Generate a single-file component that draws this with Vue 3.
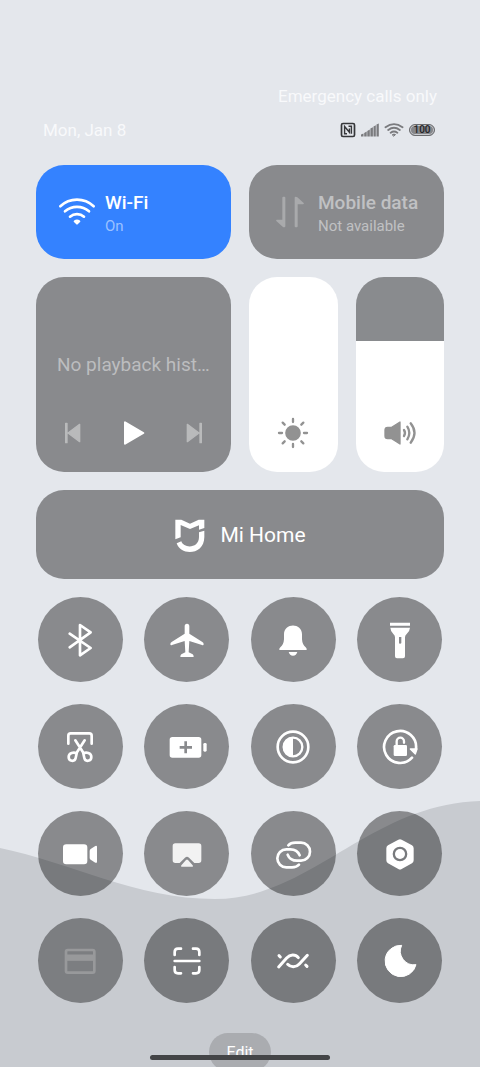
<script setup>
import { ref } from 'vue'

const brightness = ref(100)
const volume = ref(67)
</script>

<template>
  <main class="screen">
    <svg class="wave" viewBox="0 0 480 267" preserveAspectRatio="none" aria-hidden="true">
      <path d="M0 48 C70 62 135 99 215 99 C310 99 370 4 480 1 V267 H0Z" />
    </svg>

    <header class="status">
      <p class="carrier">Emergency calls only</p>
      <div class="status-row">
        <span>Mon, Jan 8</span>
        <div class="indicators">
          <svg width="16" height="16" viewBox="0 0 16 16" fill="none" stroke="#36373a" aria-label="NFC">
            <rect x="1.500" y="1.500" width="13" height="13" rx="1.500" stroke-width="1.700" />
            <path d="M7 11.800H4.600V4.500L9.400 10.300V6.500M8.500 4.300H11.400V11.800" stroke-width="1.400" />
          </svg>
          <svg width="18" height="14" viewBox="0 0 18 14" fill="#7a7b7e" aria-label="Signal">
            <path d="M0 11.500 L2.500 10.500V13.500H0zM3.200 10L5.700 8.500V13.500H3.200zM6.300 8L8.800 6.500V13.500H6.300zM9.400 5.500L11.900 4.200V13.500H9.400zM12.500 3.500L14.800 2.200V13.500H12.500zM15.500 1.500L17.800 .5V13.500H15.500z" />
          </svg>
          <svg width="20" height="14" viewBox="0 0 20 14" fill="none" stroke="#7a7b7e" stroke-width="1.900" stroke-linecap="round" aria-label="Wi-Fi signal">
            <path d="M1.500 4.200Q10-2 18.500 4.200M4.200 7Q10 2.600 15.800 7M6.700 9.700Q10 7.200 13.300 9.700" />
            <path d="M8.500 11.600Q10 10.500 11.500 11.600L10 13Z" fill="#7a7b7e" stroke-width="1" />
          </svg>
          <span class="battery">100</span>
        </div>
      </div>
    </header>

    <section class="panel" aria-label="Control center">
      <div class="pair">
        <button class="card toggle on" aria-pressed="true">
          <svg class="icon" viewBox="-72 -72 144 144" fill="none" stroke="#fff" stroke-width="8" stroke-linecap="round">
            <path d="M-50 -17A72 72 0 0 1 50 -17M-36 -2A55 55 0 0 1 36 -2M-21 14A32 32 0 0 1 21 14" />
            <path d="M-7 28Q0 23 7 28L0 35Z" fill="#fff" stroke-width="6" stroke-linejoin="round" />
          </svg>
          <span class="labels"><strong>Wi-Fi</strong><small>On</small></span>
        </button>
        <button class="card toggle off" aria-pressed="false">
          <svg class="icon" viewBox="-72 -72 144 144" fill="#a9aaac">
            <path d="M-23 -43Q-23 -46 -20 -46H-17Q-14 -46 -14 -43V43Q-14 46 -17 46Q-20 46 -22 44L-41 27Q-43 23 -39 23H-23Z" />
            <path transform="rotate(180)" d="M-23 -43Q-23 -46 -20 -46H-17Q-14 -46 -14 -43V43Q-14 46 -17 46Q-20 46 -22 44L-41 27Q-43 23 -39 23H-23Z" />
          </svg>
          <span class="labels"><strong>Mobile data</strong><small>Not available</small></span>
        </button>
      </div>

      <div class="pair">
        <div class="card media">
          <p>No playback hist…</p>
          <div class="transport">
            <button aria-label="Previous">
              <svg class="icon" viewBox="-72 -72 144 144" fill="#b9babb" stroke="#b9babb" stroke-width="4" stroke-linejoin="round">
                <path d="M-22 -29H-18V29H-22ZM-15 0L20 -26V26Z" />
              </svg>
            </button>
            <button aria-label="Play">
              <svg class="icon" viewBox="-72 -72 144 144" fill="#fff" stroke="#fff" stroke-width="6" stroke-linejoin="round">
                <path d="M-27 -32V32L28 0Z" />
              </svg>
            </button>
            <button aria-label="Next">
              <svg class="icon" viewBox="-72 -72 144 144" fill="#b9babb" stroke="#b9babb" stroke-width="4" stroke-linejoin="round">
                <path d="M22 -29H18V29H22ZM15 0L-20 -26V26Z" />
              </svg>
            </button>
          </div>
        </div>
        <div class="sliders">
          <label class="slider">
            <input v-model="brightness" type="range" min="0" max="100" aria-label="Brightness" :style="{ '--level': brightness + '%' }" />
            <svg class="icon" viewBox="-72 -72 144 144" fill="#929292" stroke="#929292" stroke-width="7" stroke-linecap="round">
              <circle r="20" />
              <path d="M0 -42V-33M0 33V42M-42 0H-33M33 0H42M-31 -31L-25 -25M25 25L31 31M-31 31L-25 25M25 -25L31 -31" />
            </svg>
          </label>
          <label class="slider">
            <input v-model="volume" type="range" min="0" max="100" aria-label="Volume" :style="{ '--level': volume + '%' }" />
            <svg class="icon" viewBox="-72 -72 144 144" fill="#929292" stroke="#929292" stroke-linecap="round" stroke-linejoin="round">
              <path d="M-37 -17H-25L0 -33V33L-25 17H-37Q-45 17 -45 9V-9Q-45 -17 -37 -17Z" stroke-width="4" />
              <path d="M12 -9Q18 0 12 9M22 -19Q34 0 22 19M32 -29Q55 0 32 29" fill="none" stroke-width="7" />
            </svg>
          </label>
        </div>
      </div>

      <button class="card home">
        <svg class="icon" viewBox="-72 -72 144 144" fill="#fff">
          <path d="M-44 -46H-26L0 -34L26 -46H43V-21L27 -16V-29L0 -18L-28 -30V7L-44 13Z" />
          <path d="M-40 25L-26 19C-19 41 27 41 27 6V-8L43 -13V6C43 61 -28 64 -40 25Z" />
        </svg>
        <span>Mi Home</span>
      </button>

      <div class="grid">
        <button aria-label="Bluetooth">
          <svg class="icon" viewBox="-72 -72 144 144" fill="none" stroke="#fff" stroke-width="8" stroke-linecap="round" stroke-linejoin="round">
            <path d="M-31 -19L32 24L0 46V-45L32 -23L-31 22" />
          </svg>
        </button>
        <button aria-label="Airplane mode">
          <svg class="icon" viewBox="-72 -72 144 144" fill="#fff">
            <path d="M-7 -41Q-7 -49 0 -49Q7 -49 7 -41V-19L45 5Q50 8 50 12Q50 17 45 15L7 3L5 37L17 43Q20 45 20 51H-20Q-20 45 -17 43L-5 37L-7 3L-45 15Q-50 17 -50 12Q-50 8 -45 5L-7 -19Z" />
          </svg>
        </button>
        <button aria-label="Silent">
          <svg class="icon" viewBox="-72 -72 144 144" fill="#fff">
            <path d="M-27 -17C-27 -52 27 -52 27 -17V-2Q28 14 38 22Q42 26 41 30H-41Q-42 26 -38 22Q-28 14 -27 -2ZM-13 36H13Q10 47 0 47Q-10 47 -13 36Z" />
          </svg>
        </button>
        <button aria-label="Flashlight">
          <svg class="icon" viewBox="-72 -72 144 144" fill="#fff" fill-rule="evenodd">
            <path d="M-30 -52H30V-43H-30ZM-29 -37H30Q29 -25 20 -18Q15 -14 15 -8V49Q15 55 9 55H-9Q-15 55 -15 49V-8Q-15 -14 -20 -18Q-28 -25 -29 -37ZM-3 -9V9Q-3 11 0 11Q4 11 4 9V-9Z" />
          </svg>
        </button>

        <button aria-label="Screenshot">
          <svg class="icon" viewBox="-72 -72 144 144" fill="none" stroke="#fff" stroke-width="8" stroke-linecap="round" stroke-linejoin="round">
            <path d="M-35 -10V-34Q-35 -41 -28 -41H28Q35 -41 35 -34V-10" />
            <path d="M-14 -20L11 19C18 15 34 17 34 30C34 43 16 46 13 33L9 15M14 -20L-11 19C-18 15 -34 17 -34 30C-34 43 -16 46 -13 33L-9 15" />
          </svg>
        </button>
        <button aria-label="Battery saver">
          <svg class="icon" viewBox="-72 -72 144 144" fill="#fff" fill-rule="evenodd">
            <path d="M-44 -30H35Q43 -30 43 -22V24Q43 32 35 32H-44Q-52 32 -52 24V-22Q-52 -30 -44 -30ZM-8 -17V-3H-22V5H-8V19H0V5H15V-3H0V-17Z" />
            <rect x="49" y="-12" width="10" height="26" rx="4" />
          </svg>
        </button>
        <button aria-label="Dark mode">
          <svg class="icon" viewBox="-72 -72 144 144" fill="none" stroke="#fff">
            <circle r="46" stroke-width="8" />
            <circle r="28" stroke-width="7" />
            <path d="M0 -30A30 30 0 0 0 0 30Z" fill="#fff" stroke="none" />
          </svg>
        </button>
        <button aria-label="Lock orientation">
          <svg class="icon" viewBox="-72 -72 144 144" fill="none" stroke="#fff" stroke-width="8" stroke-linecap="round" stroke-linejoin="round">
            <path d="M36 32A48 48 0 1 1 48 5" />
            <path d="M31 6H51L46 21Z" fill="#fff" stroke-width="4" />
            <path d="M-10 -6V-17A11 11 0 0 1 12 -17V-13" stroke-width="7" />
            <rect x="-19" y="-6" width="40" height="33" rx="4" fill="#fff" stroke="none" />
          </svg>
        </button>

        <button aria-label="Screen recorder">
          <svg class="icon" viewBox="-72 -72 144 144" fill="#fff">
            <rect x="-51" y="-29" width="73" height="60" rx="10" />
            <path d="M29 -9Q29 -13 32 -15L46 -24Q51 -26 51 -21V23Q51 28 46 26L32 17Q29 15 29 11Z" />
          </svg>
        </button>
        <button aria-label="Cast">
          <svg class="icon" viewBox="-72 -72 144 144" fill="#f2f2f2">
            <path d="M-35 -32H35Q43 -32 43 -24V19Q43 27 35 27H22L6 11Q0 6 -6 11L-22 27H-35Q-43 27 -43 19V-24Q-43 -32 -35 -32ZM-17 34L-3 18Q0 15 3 18L17 34Q20 38 16 38H-16Q-20 38 -17 34Z" />
          </svg>
        </button>
        <button aria-label="Connected devices">
          <svg class="icon" viewBox="-72 -72 144 144" fill="none" stroke="#fff" stroke-width="8" stroke-linecap="round">
            <g transform="translate(2 3)">
              <path d="M-16 -29Q-9 -37 5 -37H22A27 27 0 0 1 22 17H10Q-11 17 -18 -1" />
              <path transform="rotate(180)" d="M-16 -29Q-9 -37 5 -37H22A27 27 0 0 1 22 17H10Q-11 17 -18 -1" />
            </g>
          </svg>
        </button>
        <button aria-label="Settings">
          <svg class="icon" viewBox="-72 -72 144 144" fill="#fff" fill-rule="evenodd">
            <path d="M-5 -43Q0 -46 5 -43L36 -26Q41 -23 41 -17V19Q41 25 36 28L5 45Q0 48 -5 45L-36 28Q-41 25 -41 19V-17Q-41 -23 -36 -26ZM0 -22A22 22 0 0 0 0 22A22 22 0 0 0 0 -22Z" />
            <circle r="15" />
          </svg>
        </button>

        <button class="unavailable" aria-label="Wallet">
          <svg class="icon" viewBox="-72 -72 144 144" fill="none" stroke="#98999b" stroke-width="8">
            <rect x="-42" y="-33" width="85" height="68" rx="5" />
            <path d="M-42 -10H43" stroke-width="19" />
          </svg>
        </button>
        <button aria-label="Scanner">
          <svg class="icon" viewBox="-72 -72 144 144" fill="none" stroke="#fff" stroke-width="8" stroke-linecap="round">
            <path d="M-37 -18V-27Q-37 -37 -27 -37H-18M18 -37H27Q37 -37 37 -27V-18M-37 18V27Q-37 37 -27 37H-18M18 37H27Q37 37 37 27V18M-37 0H37" />
          </svg>
        </button>
        <button aria-label="Mi Share">
          <svg class="icon" viewBox="-72 -72 144 144" fill="none" stroke="#fff" stroke-width="9" stroke-linecap="round">
            <path d="M-43 18L-19 -9C-9 -20 7 -21 16 -10M-16 10C-7 20 9 20 19 9L43 -17M-42 -16L-38 -12M38 12L42 16" />
          </svg>
        </button>
        <button aria-label="Do not disturb">
          <svg class="icon" viewBox="-72 -72 144 144" fill="#fff" stroke="#fff" stroke-width="3" stroke-linejoin="round">
            <path d="M5 -47A47 47 0 1 0 48 11A41 41 0 0 1 5 -47Z" />
          </svg>
        </button>
      </div>

      <button class="edit">Edit</button>
    </section>
    <div class="handle"></div>
  </main>
</template>

<style>
body {
  margin: 0;
  background: #e4e7ec;
}
</style>

<style scoped>
.screen {
  position: relative;
  box-sizing: border-box;
  height: 100vh;
  padding: 84px 36px 0;
  overflow: hidden;
  background: #e4e7ec;
  color: #fff;
  font-family: Roboto, "Liberation Sans", sans-serif;
}

.wave {
  position: absolute;
  inset: auto 0 0;
  width: 100%;
  height: 267px;
  fill: #c8cbd0;
}

button {
  margin: 0;
  padding: 0;
  border: 0;
  background: none;
  color: inherit;
  font: inherit;
}

p {
  margin: 0;
}

.icon {
  display: block;
  flex: none;
  width: 48px;
  height: 48px;
}

.status {
  position: relative;
  padding: 0 7px;
  color: #f8f9fb;
  font-size: 17px;
  line-height: 24px;
}

.carrier {
  text-align: right;
}

.status-row {
  display: flex;
  align-items: center;
  justify-content: space-between;
  margin-top: 10px;
}

.indicators {
  display: flex;
  align-items: center;
  gap: 5px;
  padding-right: 2px;
}

.battery {
  box-sizing: border-box;
  width: 26px;
  height: 12px;
  border: 1px solid #6b6c6f;
  border-radius: 6px;
  background: #85868a;
  box-shadow: inset 0 0 0 1px #c9cbcf;
  color: #222326;
  font-size: 10px;
  font-weight: 500;
  line-height: 10px;
  text-align: center;
}

.panel {
  position: relative;
  display: flex;
  flex-direction: column;
  gap: 18px;
  margin-top: 23px;
}

.pair {
  display: grid;
  grid-template-columns: 1fr 1fr;
  gap: 18px;
}

.card {
  border-radius: 28px;
  background: rgba(0, 0, 0, 0.4);
}

.toggle {
  display: flex;
  align-items: center;
  gap: 4px;
  height: 94px;
  padding-left: 17px;
  text-align: left;
}

.toggle.on {
  background: #3482ff;
}

.labels {
  display: flex;
  flex-direction: column;
  padding-top: 3px;
}

.labels strong {
  font-size: 19px;
  font-weight: 500;
  line-height: 24px;
}

.labels small {
  color: #9bc1ff;
  font-size: 15px;
  line-height: 22px;
}

.off .labels strong,
.off .labels small {
  color: #c0c1c3;
}

.media {
  display: flex;
  flex-direction: column;
  justify-content: flex-end;
  box-sizing: border-box;
  height: 195px;
  padding: 0 13px 15px;
}

.media p {
  margin: 0 0 32px 8px;
  color: #bcbdbf;
  font-size: 19px;
  line-height: 24px;
  white-space: nowrap;
}

.transport {
  display: flex;
  justify-content: space-between;
}

.sliders {
  display: grid;
  grid-template-columns: 1fr 1fr;
  gap: 18px;
}

.slider {
  position: relative;
  height: 195px;
  border-radius: 28px;
  overflow: hidden;
}

.slider input {
  display: block;
  width: 100%;
  height: 100%;
  margin: 0;
  appearance: none;
  writing-mode: vertical-lr;
  direction: rtl;
  background: linear-gradient(to top, #fff var(--level), rgba(0, 0, 0, 0.4) var(--level));
}

.slider input::-webkit-slider-thumb {
  appearance: none;
  width: 100%;
  height: 1px;
  background: transparent;
}

.slider .icon {
  position: absolute;
  bottom: 15px;
  left: calc(50% - 24px);
  pointer-events: none;
}

.home {
  display: flex;
  align-items: center;
  justify-content: center;
  gap: 6px;
  height: 89px;
  padding-right: 8px;
  font-size: 21px;
}

.grid {
  display: grid;
  grid-template-columns: repeat(4, 1fr);
  gap: 22px 18px;
  justify-items: center;
}

.grid button {
  display: grid;
  place-items: center;
  width: 85px;
  height: 85px;
  border-radius: 50%;
  background: rgba(0, 0, 0, 0.4);
}

.grid .unavailable {
  background: rgba(0, 0, 0, 0.38);
}

.edit {
  align-self: center;
  width: 62px;
  height: 38px;
  margin-top: 12px;
  border-radius: 19px;
  background: #aaacb0;
  font-size: 16px;
}

.handle {
  position: absolute;
  bottom: 7px;
  left: 50%;
  width: 180px;
  height: 5px;
  margin-left: -90px;
  border-radius: 3px;
  background: #444547;
}
</style>
